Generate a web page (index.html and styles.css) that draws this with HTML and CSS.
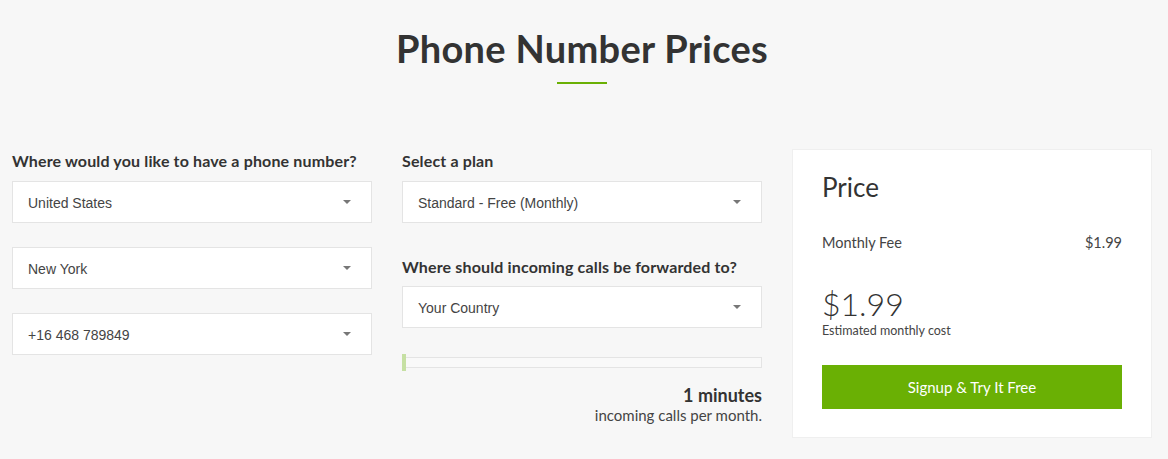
FILE: index.html
```html
<!DOCTYPE html>
<html>
<head>
<meta charset="utf-8">
<link rel="stylesheet" href="styles.css">
</head>
<body>
<div class="page">
  <header class="head">
    <h1 class="title">Phone Number Prices</h1>
    <div class="rule"></div>
  </header>
  <div class="cols">
    <div class="col">
      <label class="lbl">Where would you like to have a phone number?</label>
      <div class="sel"><span>United States</span><i class="caret"></i></div>
      <div class="sel"><span>New York</span><i class="caret"></i></div>
      <div class="sel"><span>+16 468 789849</span><i class="caret"></i></div>
    </div>
    <div class="col">
      <label class="lbl">Select a plan</label>
      <div class="sel"><span>Standard - Free (Monthly)</span><i class="caret"></i></div>
      <label class="lbl lbl2">Where should incoming calls be forwarded to?</label>
      <div class="sel"><span>Your Country</span><i class="caret"></i></div>
      <div class="slider"><div class="handle"></div></div>
      <div class="mins">1 minutes</div>
      <div class="mins-sub">incoming calls per month.</div>
    </div>
    <div class="card">
      <h2 class="card-title">Price</h2>
      <div class="fee"><span>Monthly Fee</span><span>$1.99</span></div>
      <div class="total">$1.99</div>
      <div class="est">Estimated monthly cost</div>
      <a class="btn">Signup &amp; Try It Free</a>
    </div>
  </div>
</div>
</body>
</html>
```

FILE: styles.css
```css
html, body {
  margin: 0;
  padding: 0;
  background: #f7f7f7;
}
body {
  font-family: "Lato", "Open Sans", sans-serif;
  color: #333;
}
.page {
  width: 1140px;
  margin-left: 12px;
}
.head {
  display: flex;
  flex-direction: column;
  align-items: center;
  padding-top: 25px;
}
.title {
  margin: 0;
  font-size: 38px;
  line-height: 46px;
  font-weight: 700;
  letter-spacing: 0.3px;
  color: #333;
}
.rule {
  width: 50px;
  height: 2px;
  background: #6ab004;
  margin-top: 11px;
}
.cols {
  display: grid;
  grid-template-columns: 360px 360px 360px;
  column-gap: 30px;
  margin-top: 66px;
  align-items: start;
}
.col {
  display: flex;
  flex-direction: column;
}
.lbl {
  display: block;
  font-size: 16px;
  font-weight: 700;
  letter-spacing: 0.15px;
  line-height: 20px;
  margin: 1px 0 10px;
  color: #333;
}
.lbl2 {
  margin-top: 10px;
  margin-bottom: 9px;
}
.sel {
  height: 42px;
  box-sizing: border-box;
  background: #fff;
  border: 1px solid #e4e4e4;
  display: flex;
  align-items: center;
  justify-content: space-between;
  padding: 0 20px 0 15px;
  font-family: "Liberation Sans", Arial, sans-serif;
  font-size: 14px;
  color: #444;
  margin-bottom: 24px;
}
.sel span { padding-top: 1px; }
.caret {
  width: 0;
  height: 0;
  border-left: 4px solid transparent;
  border-right: 4px solid transparent;
  border-top: 4px solid #777;
  margin-top: -1px;
}
.slider {
  position: relative;
  height: 11px;
  box-sizing: border-box;
  border: 1px solid #e4e4e4;
  background: #f9f9f9;
  margin-top: 5px;
}
.handle {
  position: absolute;
  left: -1px;
  top: -4px;
  width: 4px;
  height: 17px;
  background: #c6e0a3;
}
.mins {
  text-align: right;
  font-size: 18px;
  font-weight: 700;
  line-height: 22px;
  margin-top: 16px;
  color: #333;
}
.mins-sub {
  text-align: right;
  font-size: 15px;
  line-height: 18px;
  color: #444;
}
.card {
  background: #fff;
  border: 1px solid #efefef;
  margin-top: -1px;
  padding: 22px 29px 28px;
  display: flex;
  flex-direction: column;
}
.card-title {
  margin: 0;
  font-size: 26px;
  font-weight: 400;
  line-height: 30px;
}
.fee {
  display: flex;
  justify-content: space-between;
  font-size: 14.5px;
  line-height: 18px;
  margin-top: 32px;
  color: #444;
}
.total {
  font-size: 32px;
  line-height: 38px;
  font-weight: 300;
  margin-top: 33px;
  color: #333;
}
.est {
  font-size: 12.5px;
  line-height: 16px;
  color: #444;
}
.btn {
  display: flex;
  align-items: center;
  justify-content: center;
  height: 44px;
  background: #6ab004;
  color: #fff;
  font-size: 15px;
  margin-top: 26px;
}
```
